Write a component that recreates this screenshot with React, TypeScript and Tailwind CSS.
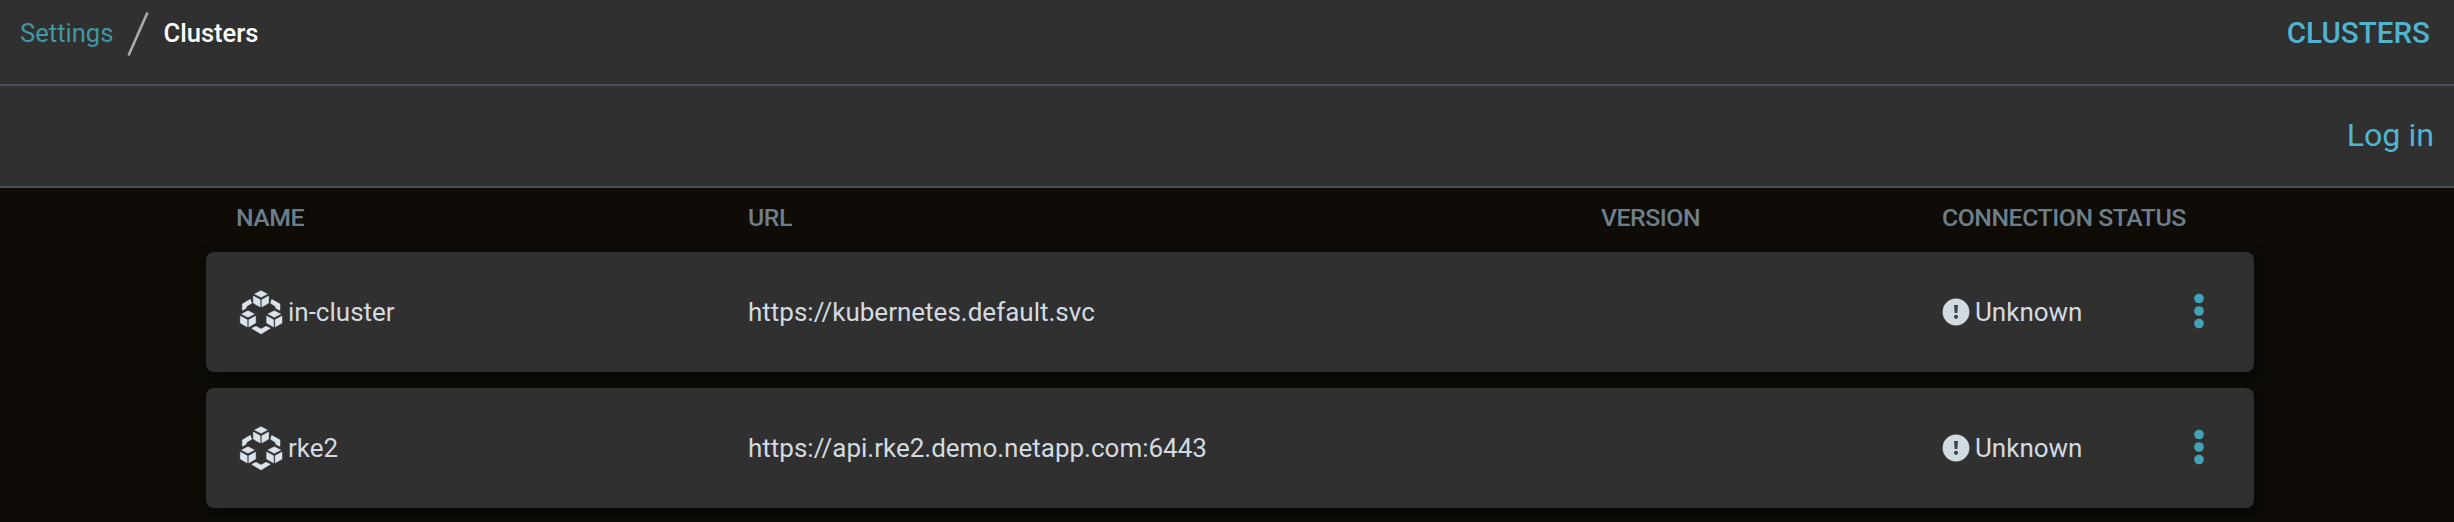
const clusters = [
  { name: 'in-cluster', url: 'https://kubernetes.default.svc', status: 'Unknown' },
  { name: 'rke2', url: 'https://api.rke2.demo.netapp.com:6443', status: 'Unknown' },
];

const columns = 'grid grid-cols-[512px_853px_341px_1fr] pl-[30px]';

function Cube({ x, y }: { x: number; y: number }) {
  return (
    <g transform={`translate(${x} ${y})`}>
      <path d="M0-25 19-15 0-5-19-15Z" />
      <path d="M-23-9-2.5 2V24L-23 12Z" />
      <path d="M23-9 2.5 2V24L23 12Z" />
    </g>
  );
}

function ClusterIcon() {
  return (
    <svg viewBox="0 0 135 135" className="size-[45px] shrink-0 fill-[#dbe4ec] stroke-[#dbe4ec] stroke-[1.5]">
      <Cube x={66} y={27} />
      <Cube x={27} y={87} />
      <Cube x={106} y={87} />
      <path d="M10 42 34 28 38 40 24 48 20 56 10 61Z" />
      <path d="M123 42 98 28 95 40 108 48 112 56 123 61Z" />
      <path d="M38 115 51 109 66 117 81 109 94 115 66 132Z" />
    </svg>
  );
}

function UnknownIcon() {
  return (
    <svg viewBox="0 0 28 28" className="size-7 shrink-0">
      <circle cx="14" cy="14" r="13.4" fill="#d1dae0" />
      <path d="M12 7h4l-.6 8h-2.8z" fill="#404347" />
      <circle cx="14" cy="18.8" r="2.1" fill="#404347" />
    </svg>
  );
}

export default function App() {
  return (
    <div className="h-[522px] overflow-hidden bg-[#0f0c07] font-['Roboto',sans-serif] text-[26px] text-[#d3dbe0]">
      <header className="flex h-[86px] items-center justify-between border-b-2 border-[#495160] bg-[#303030] pr-[24px] pb-[17px] pl-[20px]">
        <nav className="flex items-center">
          <a className="text-[25.6px] text-[#3f98a6]">Settings</a>
          <svg viewBox="0 0 24 46" className="mr-[13px] ml-[13px] h-[46px] w-6">
            <path d="M2.5 44.5 21.5 1.5" stroke="#a9acae" strokeWidth="2.6" fill="none" />
          </svg>
          <span className="text-[25.6px] font-medium text-white">Clusters</span>
        </nav>
        <h1 className="text-[29.6px] font-medium text-[#4fb4d0]">CLUSTERS</h1>
      </header>
      <div className="flex h-[102px] items-center justify-end border-b-2 border-[#495160] bg-[#303030] pr-[20px] pb-[2px]">
        <a className="text-[32.2px] text-[#4fb4d0]">Log in</a>
      </div>
      <main className="mr-[200px] ml-[206px] flex flex-col gap-4">
        <div className={`${columns} -mb-4 h-16 items-center pb-1 text-[24.8px] font-medium tracking-[-0.46px] text-[#6d7f8b]`}>
          <span>NAME</span>
          <span>URL</span>
          <span>VERSION</span>
          <span>CONNECTION STATUS</span>
        </div>
        {clusters.map((c) => (
          <div key={c.name} className={`${columns} h-[120px] items-center rounded-lg bg-[#303030] shadow-[2px_4px_8px_4px_#080b08]`}>
            <div className="flex items-center gap-[4px] pl-[3px]">
              <ClusterIcon />
              <span>{c.name}</span>
            </div>
            <span>{c.url}</span>
            <span />
            <div className="flex items-center">
              <UnknownIcon />
              <span className="ml-[5px]">{c.status}</span>
              <svg viewBox="0 0 12 36" className="mr-[49px] mb-[2px] ml-auto h-9 w-3 fill-[#42a3b8]">
                <circle cx="6" cy="5.5" r="4.8" />
                <circle cx="6" cy="18" r="4.8" />
                <circle cx="6" cy="30.5" r="4.8" />
              </svg>
            </div>
          </div>
        ))}
      </main>
    </div>
  );
}
